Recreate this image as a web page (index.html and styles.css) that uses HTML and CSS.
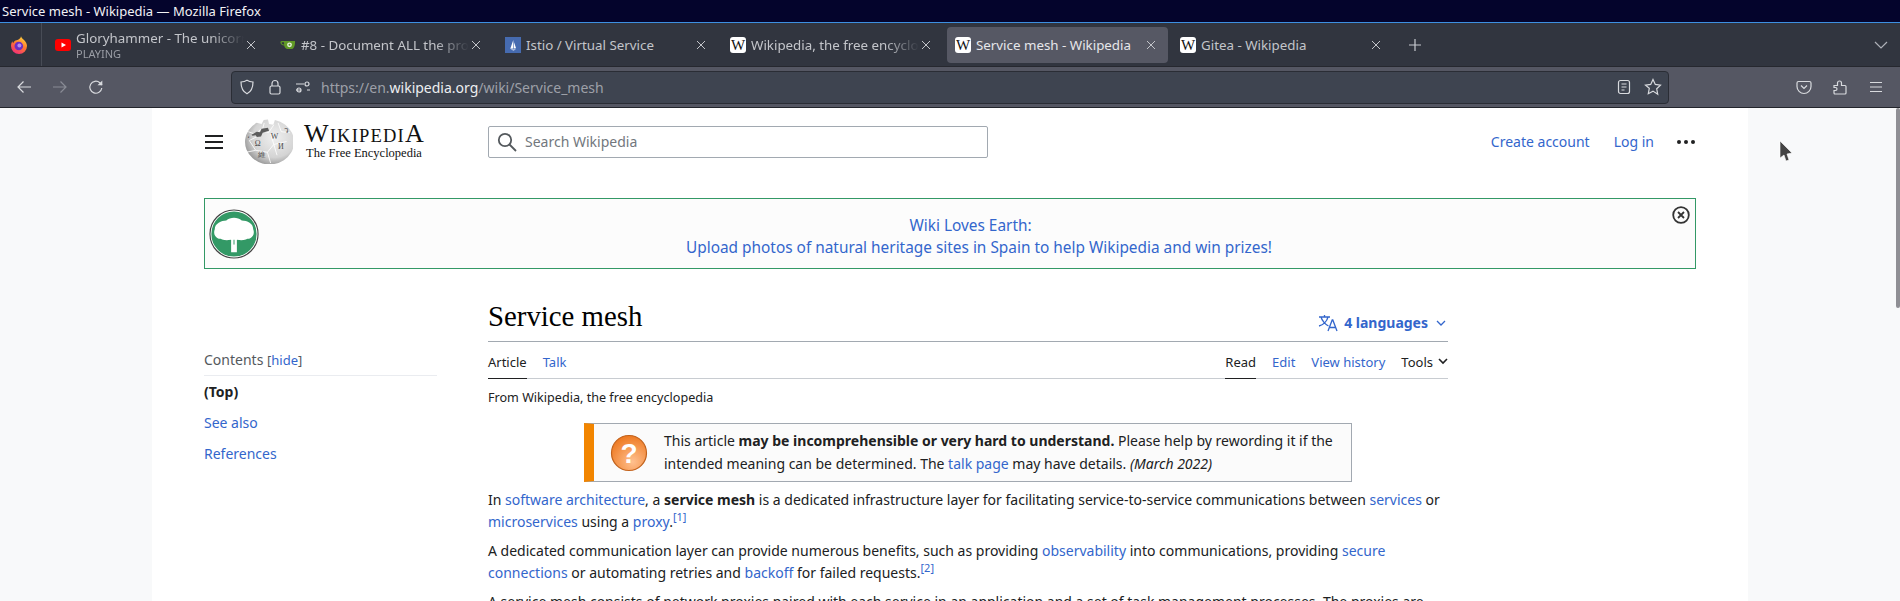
FILE: index.html
```html
<!DOCTYPE html>
<html lang="en">
<head>
<meta charset="utf-8">
<title>Service mesh - Wikipedia — Mozilla Firefox</title>
<link rel="stylesheet" href="styles.css">
</head>
<body>
<div class="window">
  <div class="titlebar">Service mesh - Wikipedia — Mozilla Firefox</div>

  <div class="tabbar">
    <div class="fxslot">
      <svg width="18" height="18" viewBox="0 0 18 18"><defs><linearGradient id="fx" x1="0.7" y1="0" x2="0.2" y2="1"><stop offset="0" stop-color="#ffd53d"/><stop offset="0.45" stop-color="#ff7a2e"/><stop offset="1" stop-color="#f2277e"/></linearGradient></defs><path d="M11 .3c.6 2.200 2.800 3.200 4.300 5.200 1.300 1.700 1.700 3.400 1.700 4.500A8 8 0 0 1 1 10c0-2 .6-3.600 1.400-4.800.1 1 .4 1.600.9 2 .3-1.800 1.700-2.700 3.300-3 2.200-.5 4.200-1.700 4.400-3.900z" fill="url(#fx)"/><circle cx="8.800" cy="10" r="4.300" fill="#6b2fc4"/><circle cx="9.400" cy="9.400" r="2" fill="#b48cf0"/></svg>
    </div>
    <div class="tab first">
      <svg class="fav" width="16" height="16" viewBox="0 0 16 16"><rect y="2" width="16" height="12" rx="3" fill="#f00"/><path d="M6.500 5.500l4.500 2.500-4.500 2.500z" fill="#fff"/></svg>
      <div class="tabtext fade"><div class="tabname">Gloryhammer - The unicorn</div><div class="tabsub">PLAYING</div></div>
      <svg class="x" width="10" height="10" viewBox="0 0 10 10"><path d="M1 1l8 8M9 1l-8 8"/></svg>
    </div>
    <div class="tab">
      <svg class="fav" width="16" height="16" viewBox="0 0 16 16"><path d="M3 4h12c.3 3-.6 7.500-3 8H7C5 11.500 4.500 10 4.200 8.600 2 8.400.4 7 .4 5.200.4 4 1.500 4 3 4zm1 1.300H2.600c-.8 0-1 .3-1 .7 0 .9 1.100 1.500 2.500 1.600z" fill="#609926"/><circle cx="9.500" cy="7.800" r="2.400" fill="#fff" opacity=".85"/><circle cx="9.500" cy="7.800" r="1" fill="#609926"/></svg>
      <div class="tabtext fade"><div class="tabname">#8 - Document ALL the pro</div></div>
      <svg class="x" width="10" height="10" viewBox="0 0 10 10"><path d="M1 1l8 8M9 1l-8 8"/></svg>
    </div>
    <div class="tab">
      <svg class="fav" width="16" height="16" viewBox="0 0 16 16"><rect width="16" height="16" fill="#466bb0"/><path d="M8.300 3v8.500l-3 .2z" fill="#fff"/><path d="M8.900 5l2.200 6.300-2.200.3z" fill="#fff"/><path d="M5.500 12.400h5.500L8.500 13.600z" fill="#fff"/></svg>
      <div class="tabtext"><div class="tabname">Istio / Virtual Service</div></div>
      <svg class="x" width="10" height="10" viewBox="0 0 10 10"><path d="M1 1l8 8M9 1l-8 8"/></svg>
    </div>
    <div class="tab">
      <span class="fav wfav">W</span>
      <div class="tabtext fade"><div class="tabname">Wikipedia, the free encyclo</div></div>
      <svg class="x" width="10" height="10" viewBox="0 0 10 10"><path d="M1 1l8 8M9 1l-8 8"/></svg>
    </div>
    <div class="tab active">
      <span class="fav wfav">W</span>
      <div class="tabtext"><div class="tabname">Service mesh - Wikipedia</div></div>
      <svg class="x" width="10" height="10" viewBox="0 0 10 10"><path d="M1 1l8 8M9 1l-8 8"/></svg>
    </div>
    <div class="tab">
      <span class="fav wfav">W</span>
      <div class="tabtext"><div class="tabname">Gitea - Wikipedia</div></div>
      <svg class="x" width="10" height="10" viewBox="0 0 10 10"><path d="M1 1l8 8M9 1l-8 8"/></svg>
    </div>
    <svg class="plus" width="14" height="14" viewBox="0 0 14 14"><path d="M7 1v12M1 7h12"/></svg>
    <svg class="allt" width="14" height="8" viewBox="0 0 14 8"><path d="M1 1l6 6 6-6"/></svg>
  </div>

  <div class="navbar">
    <div class="navbtns">
      <svg class="ic" width="16" height="16" viewBox="0 0 16 16"><path d="M15 8H2M7.500 2.500L2 8l5.500 5.500"/></svg>
      <svg class="ic dim" width="16" height="16" viewBox="0 0 16 16"><path d="M1 8h13M8.500 2.500L14 8l-5.500 5.500"/></svg>
      <svg class="ic" width="16" height="16" viewBox="0 0 16 16"><path d="M13.800 9a6 6 0 1 1-2-5.300L14 6"/><path d="M14.300 1.500V6.300H9.500" fill="#d8dade" stroke="none"/></svg>
    </div>
    <div class="urlbar">
      <svg class="ic" width="16" height="16" viewBox="0 0 16 16"><path d="M8 1.200c2 1.200 3.800 1.600 6 1.800 0 5.500-1.500 9.500-6 11.800C3.500 12.500 2 8.500 2 3c2.200-.2 4-.6 6-1.800z"/></svg>
      <svg class="ic" width="16" height="16" viewBox="0 0 16 16"><rect x="3" y="7" width="10" height="8" rx="1.500"/><path d="M5 7V4.500a3 3 0 0 1 6 0V7"/></svg>
      <svg class="ic" width="16" height="16" viewBox="0 0 16 16"><path d="M1 5h8M1 11h5M12 11h3"/><circle cx="12" cy="5" r="2"/><circle cx="4" cy="11" r="2" /></svg>
      <div class="url">https://en.<b>wikipedia.org</b>/wiki/Service_mesh</div>
      <svg class="ic" width="16" height="16" viewBox="0 0 16 16"><rect x="2.500" y="1.500" width="11" height="13" rx="2"/><path d="M5.500 5h5M5.500 8h5M5.500 11h3"/></svg>
      <svg class="ic" width="18" height="18" viewBox="0 0 18 18"><path d="M9 1.500l2.300 4.900 5.200.7-3.800 3.700 1 5.400L9 13.100l-4.700 2.600 1-5.400L1.500 7.100l5.200-.7z"/></svg>
    </div>
    <div class="navright">
      <svg class="ic" width="16" height="16" viewBox="0 0 16 16"><path d="M2.500 2.500h11a1.500 1.500 0 0 1 1.500 1.500v3.500a7 7 0 0 1-14 0V4a1.500 1.500 0 0 1 1.500-1.500z"/><path d="M5 6.500l3 3 3-3"/></svg>
      <svg class="ic" width="16" height="16" viewBox="0 0 16 16"><path d="M2 6.500h3.500V4a2 2 0 0 1 4 0v2.500H13a1 1 0 0 1 1 1V14a1 1 0 0 1-1 1H3a1 1 0 0 1-1-1v-2.500h1.500a1.500 1.500 0 0 0 0-3H2z"/></svg>
      <svg class="ic" width="16" height="16" viewBox="0 0 16 16"><path d="M2 3.500h12M2 8h12M2 12.500h12"/></svg>
    </div>
  </div>

  <div class="viewport">
    <div class="sheet">
      <header class="wikihead">
        <div class="burger"><i></i><i></i><i></i></div>
        <svg class="globe" width="49" height="45" viewBox="2 0 46 46" preserveAspectRatio="none">
          <defs><radialGradient id="gl" cx="0.6" cy="0.4" r="0.68"><stop offset="0" stop-color="#f0f0f0"/><stop offset="0.65" stop-color="#d4d4d4"/><stop offset="1" stop-color="#8e8e8e"/></radialGradient></defs>
          <path d="M14 3.800A23 23 0 1 0 31 1l-1.500 5-4-1-1-4.500-4 .5-2 4z" fill="url(#gl)"/>
          <path d="M6 13l8 3 3-5 8 3 5-8M19 12l2-8M27 15l3 11 12-3M30 26l-6 8-11-2M13 32l-6-10 9-5M24 34l3 11M34 4l3 9 8 1M30 26l3 11M4 34l9-2" fill="none" stroke="#fff" stroke-width=".8"/>
          <path d="M9 16l5-3 3 .5 1.500-3.500 6-1 1 3-6 2-1.500 4-4 .5-1-2-3 .5z" fill="#5c5c5c"/>
          <text x="12" y="28" class="gtxt">Ω</text><text x="27" y="20" class="gtxt">W</text><text x="34" y="31" class="gtxt">И</text><text x="15" y="39" class="gtxt">維</text><text x="5" y="23" class="gtxt">ʻ</text><text x="40" y="14" class="gtxt">ว</text>
        </svg>
        <div class="wordmark">
          <div class="wmname"><span class="wbig">W</span>IKIPEDI<span class="wbig">A</span></div>
          <div class="wmtag">The Free Encyclopedia</div>
        </div>
        <div class="search">
          <svg width="20" height="20" viewBox="0 0 20 20"><circle cx="8" cy="8" r="6.200"/><path d="M12.500 12.500L19 19"/></svg>
          <span>Search Wikipedia</span>
        </div>
        <nav class="userlinks">
          <a class="link">Create account</a>
          <a class="link">Log in</a>
          <div class="dots"><i></i><i></i><i></i></div>
        </nav>
      </header>

      <div class="banner">
        <svg class="tree" width="50" height="50" viewBox="0 0 52 52"><circle cx="26" cy="26" r="24.500" fill="#339966" stroke="#fff" stroke-width="2"/><circle cx="26" cy="26" r="25" fill="none" stroke="#444" stroke-width="1.200"/><path d="M23 45V32c-6 1-9 0-11-1-5 0-8-5-6-10 0-6 7-9 12-9 4-4 12-4 16 0 6 0 12 3 12 9 2 5-1 10-6 10-2 1-5 2-11 1v13z" fill="#fff"/><path d="M26 32v5" stroke="#339966" stroke-width="1"/></svg>
        <div class="bannertext">
          <a class="link bannerlead">Wiki Loves Earth:</a>
          <a class="link">Upload photos of natural heritage sites in Spain to help Wikipedia and win prizes!</a>
        </div>
        <svg class="bclose" width="18" height="18" viewBox="0 0 18 18"><circle cx="9" cy="9" r="7.800"/><path d="M6 6l6 6M12 6l-6 6"/></svg>
      </div>

      <div class="columns">
        <aside class="toc">
          <div class="tochead"><span class="toctitle">Contents</span> <span class="tochide">[<a class="link">hide</a>]</span></div>
          <div class="tocitem"><b>(Top)</b></div>
          <div class="tocitem"><a class="link">See also</a></div>
          <div class="tocitem"><a class="link">References</a></div>
        </aside>
        <main class="article">
          <div class="headrow">
            <h1>Service mesh</h1>
            <div class="langs">
              <svg width="20" height="18" viewBox="0 0 20 18"><path d="M1 3h11M6.500 1v2M10 3c-1 4-4.500 8-9 9M3 3c1 4 5 8 7.500 9"/><path d="M10 17l4.200-11h.6L19 17M11.500 13.500h6"/></svg>
              <span>4 languages</span>
              <svg class="chev" width="10" height="6" viewBox="0 0 10 6"><path d="M1 1l4 4 4-4"/></svg>
            </div>
          </div>
          <div class="tabsrow">
            <div class="tabgroup">
              <span class="ptab sel">Article</span>
              <a class="ptab link">Talk</a>
            </div>
            <div class="tabgroup">
              <span class="ptab sel">Read</span>
              <a class="ptab link">Edit</a>
              <a class="ptab link">View history</a>
              <span class="ptab tools">Tools <svg width="10" height="7" viewBox="0 0 10 7"><path d="M1 1l4 4 4-4"/></svg></span>
            </div>
          </div>
          <div class="sitesub">From Wikipedia, the free encyclopedia</div>
          <div class="notice">
            <svg class="qmark" width="38" height="38" viewBox="0 0 38 38"><defs><radialGradient id="qg" cx="0.6" cy="0.75" r="0.75"><stop offset="0" stop-color="#ffc08f"/><stop offset="1" stop-color="#ee7a22"/></radialGradient></defs><circle cx="19" cy="19" r="17.500" fill="url(#qg)" stroke="#c2621c" stroke-width="1.200"/><text x="19" y="29" class="qtxt">?</text></svg>
            <div class="noticetext">This article <b>may be incomprehensible or very hard to understand.</b> Please help by rewording it if the intended meaning can be determined. The <a class="link">talk page</a> may have details. <i>(March 2022)</i></div>
          </div>
          <p>In <a class="link">software architecture</a>, a <b>service mesh</b> is a dedicated infrastructure layer for facilitating service-to-service communications between <a class="link">services</a> or <a class="link">microservices</a> using a <a class="link">proxy</a>.<sup class="link">[1]</sup></p>
          <p>A dedicated communication layer can provide numerous benefits, such as providing <a class="link">observability</a> into communications, providing <a class="link">secure connections</a> or automating retries and <a class="link">backoff</a> for failed requests.<sup class="link">[2]</sup></p>
          <p>A service mesh consists of network proxies paired with each service in an application and a set of task management processes. The proxies are</p>
        </main>
      </div>
    </div>
    <div class="scrollthumb"></div>
    <svg class="cursor" width="14" height="22" viewBox="0 0 14 22"><path d="M1 1l12 12-5 1 2 6-3 1-2-6-4 3z" fill="#444" stroke="#fff" stroke-width=".6"/></svg>
  </div>
</div>
</body>
</html>
```

FILE: styles.css
```css
* { box-sizing: border-box; }
html, body { margin: 0; padding: 0; height: 100%; overflow: hidden; }
body { font-family: "Noto Sans", sans-serif; color: #202122; background: #f8f9fa; }
svg { display: block; flex: none; }

.window { display: flex; flex-direction: column; width: 1900px; height: 601px; overflow: hidden; }

.titlebar { height: 23px; padding-left: 2px; background: #04042c; border-bottom: 1px solid #3d8fe0; color: #f2f2f5; font-size: 13px; line-height: 22px; white-space: nowrap; }

.tabbar { display: flex; align-items: center; height: 44px; background: #31353f; border-bottom: 1px solid #26282f; flex: none; }
.fxslot { display: flex; align-items: center; justify-content: center; width: 42px; height: 43px; border-right: 1px solid #484c56; padding-right: 3px; }
.tab { display: flex; align-items: center; width: 221px; height: 36px; margin: 0 2px; padding: 0 12px 0 8px; color: #c3c5ca; font-size: 13.330px; border-radius: 4px; flex: none; }
.tab.first { margin-left: 5px; }
.tab.active { background: #565864; color: #e6e7ea; }
.fav { margin-right: 5px; flex: none; }
.wfav { display: flex; align-items: center; justify-content: center; width: 16px; height: 16px; background: #fff; color: #111; border-radius: 3px; font-family: "Liberation Serif", serif; font-size: 15px; line-height: 16px; }
.tabtext { flex: 1; min-width: 0; overflow: hidden; }
.tabtext.fade { -webkit-mask-image: linear-gradient(to right, #000 80%, transparent 100%); mask-image: linear-gradient(to right, #000 80%, transparent 100%); }
.tabname { white-space: nowrap; line-height: 18px; }
.tabsub { font-size: 11px; line-height: 14px; color: #9a9da5; }
.x { margin-left: 2px; stroke: #c3c5ca; stroke-width: 1; fill: none; }
.plus { margin-left: 13px; stroke: #c8cad0; stroke-width: 1.200; fill: none; }
.allt { margin-left: 452px; stroke: #aeb1b8; stroke-width: 1.200; fill: none; }

.navbar { display: flex; align-items: center; height: 41px; background: #555763; border-bottom: 1px solid #23252c; flex: none; }
.ic { fill: none; stroke: #d8dade; stroke-width: 1.200; }
.ic.dim { stroke: #8a8c96; }
.navbtns { display: flex; align-items: center; width: 231px; padding-left: 16px; gap: 20px; }
.urlbar { display: flex; align-items: center; width: 1438px; height: 33px; background: #3e4450; border: 1px solid #2a2d35; border-radius: 4px; padding: 0 6px 0 7px; gap: 12px; }
.url { flex: 1; margin-left: -2px; font-size: 14px; color: #9da0a8; white-space: nowrap; }
.url b { font-weight: 400; color: #eceef0; }
.navright { display: flex; align-items: center; gap: 20px; margin-left: 127px; }

.viewport { position: relative; flex: 1; min-height: 0; background: #f8f9fa; overflow: hidden; }
.sheet { width: 1596px; height: 100%; margin-left: 152px; padding: 0 52px; background: #fff; }
.scrollthumb { position: absolute; right: 0; top: 0; width: 4px; height: 200px; background: #8f8f94; border-radius: 2px; }
.cursor { position: absolute; left: 1779px; top: 32px; }

.link { color: #3366cc; }

.wikihead { display: flex; align-items: center; height: 59px; padding-top: 8px; }
.burger { display: flex; flex-direction: column; justify-content: space-between; width: 18px; height: 14px; margin-left: 1px; }
.burger i { display: block; height: 2px; background: #202122; }
.globe { margin-left: 21px; }
.wordmark { margin-left: 11px; width: 121px; font-family: "Liberation Serif", serif; color: #111; }
.wmname { font-size: 18.500px; line-height: 22px; letter-spacing: 1.200px; white-space: nowrap; }
.wbig { font-size: 26px; }
.wmtag { font-size: 12.500px; line-height: 13px; white-space: nowrap; margin-left: 2px; }
.search { display: flex; align-items: center; gap: 8px; width: 500px; height: 32px; margin-left: 63px; padding-left: 8px; border: 1px solid #a2a9b1; border-radius: 2px; font-size: 14px; color: #72777d; }
.search svg { fill: none; stroke: #54595d; stroke-width: 1.800; }
.userlinks { display: flex; align-items: center; margin-left: auto; font-size: 14px; gap: 24px; padding-right: 1px; }
.dots { display: flex; gap: 3px; margin-left: -1px; }
.dots i { display: block; width: 4px; height: 4px; border-radius: 50%; background: #202122; }

.banner { display: flex; align-items: center; position: relative; height: 71px; margin-top: 31px; border: 1px solid #339966; background: #fcfcfc; padding-left: 4px; }
.bannertext { position: absolute; inset: 0; display: flex; flex-direction: column; align-items: center; justify-content: center; font-size: 15.400px; line-height: 22px; padding: 6px 0 0 58px; }
.bannerlead { margin-right: 17px; }
.tree { position: relative; }
.bclose { position: absolute; right: 5px; top: 7px; fill: none; stroke: #333; stroke-width: 1.800; }

.columns { display: flex; gap: 51px; }
.toc { width: 233px; flex: none; padding-top: 80px; font-size: 14px; }
.tochead { height: 27px; line-height: 22px; border-bottom: 1px solid #eaecf0; padding-bottom: 5px; }
.toctitle { color: #54595d; }
.tochide { font-size: 13px; color: #54595d; }
.tocitem { height: 31px; line-height: 31px; }
.article { width: 960px; flex: none; font-size: 14px; line-height: 22.400px; }
.headrow { display: flex; align-items: flex-end; justify-content: space-between; margin-top: 33px; height: 40px; border-bottom: 1px solid #a2a9b1; }
h1 { margin: 0 0 6px; font-family: "Liberation Serif", serif; font-weight: 400; font-size: 28.800px; line-height: 37px; color: #000; }
.langs { display: flex; align-items: center; gap: 6px; height: 36px; padding-right: 2px; color: #3366cc; font-weight: 700; font-size: 14px; }
.langs svg { fill: none; stroke: #3366cc; stroke-width: 1.300; }
.langs .chev { margin-left: 2px; }
.tabsrow { display: flex; justify-content: space-between; height: 37px; border-bottom: 1px solid #c8ccd1; font-size: 13px; }
.tabgroup { display: flex; gap: 16px; }
.ptab { display: flex; align-items: center; height: 37px; padding-top: 4px; }
.ptab.sel { border-bottom: 1px solid #202122; }
.tools { gap: 5px; }
.tools svg { fill: none; stroke: #202122; stroke-width: 1.600; margin-bottom: 2px; }
.sitesub { margin-top: 9px; font-size: 12.600px; line-height: 20px; }
.notice { display: flex; align-items: center; width: 768px; height: 59px; margin: 15px auto 0; background: #fbfbfb; border: 1px solid #a2a9b1; border-left: 10px solid #f28500; padding: 0 10px 0 16px; }
.qmark { margin-right: 16px; }
.qtxt { font-family: "Liberation Sans", sans-serif; font-weight: 700; font-size: 28px; text-anchor: middle; fill: #fff; }
.noticetext { font-size: 14px; line-height: 22.400px; }
p { margin: 7px 0 0; }
p + p { margin-top: 6px; }
sup { font-size: 11px; line-height: 0; }
.gtxt { font-family: "Liberation Serif", serif; font-size: 7.500px; fill: #4a4a4a; }
```
